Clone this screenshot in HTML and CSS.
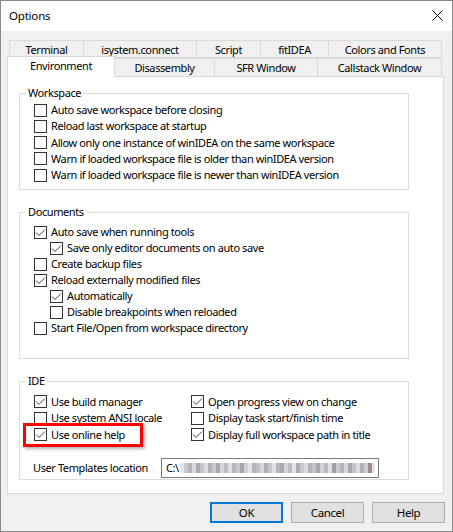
FILE: index.html
```html
<!DOCTYPE html>
<html>
<head>
<meta charset="utf-8">
<link rel="stylesheet" href="styles.css">
</head>
<body>
<div class="window">
  <div class="titlebar">
    <span class="title">Options</span>
    <svg class="close" width="11" height="11" viewBox="0 0 11 11"><path d="M0.5 0.5 L10.5 10.5 M10.5 0.5 L0.5 10.5" stroke="#000" stroke-width="1" fill="none"/></svg>
  </div>
  <div class="body">
    <div class="tabrow back">
      <div class="tab t-terminal">Terminal</div>
      <div class="tab t-isystem">isystem.connect</div>
      <div class="tab t-script">Script</div>
      <div class="tab t-fit">fitIDEA</div>
      <div class="tab t-colors">Colors and Fonts</div>
    </div>
    <div class="tabrow front">
      <div class="tab active t-env">Environment</div>
      <div class="tab t-dis">Disassembly</div>
      <div class="tab t-sfr">SFR Window</div>
      <div class="tab t-call">Callstack Window</div>
    </div>
    <div class="panel">
      <fieldset class="group ws">
        <legend>Workspace</legend>
        <div class="rows">
          <div class="cb"><span class="box"></span>Auto save workspace before closing</div>
          <div class="cb"><span class="box"></span>Reload last workspace at startup</div>
          <div class="cb"><span class="box"></span>Allow only one instance of winIDEA on the same workspace</div>
          <div class="cb"><span class="box"></span>Warn if loaded workspace file is older than winIDEA version</div>
          <div class="cb"><span class="box"></span>Warn if loaded workspace file is newer than winIDEA version</div>
        </div>
      </fieldset>
      <fieldset class="group docs">
        <legend>Documents</legend>
        <div class="rows">
          <div class="cb"><span class="box checked"></span>Auto save when running tools</div>
          <div class="cb sub"><span class="box checked"></span>Save only editor documents on auto save</div>
          <div class="cb"><span class="box"></span>Create backup files</div>
          <div class="cb"><span class="box checked"></span>Reload externally modified files</div>
          <div class="cb sub"><span class="box checked"></span>Automatically</div>
          <div class="cb sub"><span class="box"></span>Disable breakpoints when reloaded</div>
          <div class="cb"><span class="box"></span>Start File/Open from workspace directory</div>
        </div>
      </fieldset>
      <fieldset class="group ide">
        <legend>IDE</legend>
        <div class="ide-grid">
          <div class="cb"><span class="box checked"></span>Use build manager</div>
          <div class="cb"><span class="box checked"></span>Open progress view on change</div>
          <div class="cb"><span class="box"></span>Use system ANSI locale</div>
          <div class="cb"><span class="box"></span>Display task start/finish time</div>
          <div class="cb highlight-wrap"><span class="box checked"></span>Use online help<span class="highlight"></span></div>
          <div class="cb"><span class="box checked"></span>Display full workspace path in title</div>
        </div>
        <div class="templates">
          <span class="tlabel">User Templates location</span>
          <div class="input"><span class="path">C:\</span><span class="blur"></span></div>
        </div>
      </fieldset>
    </div>
    <div class="buttons">
      <div class="btn default">OK</div>
      <div class="btn">Cancel</div>
      <div class="btn">Help</div>
    </div>
  </div>
</div>
</body>
</html>
```
FILE: styles.css
```css
* { box-sizing: border-box; }
html, body { margin: 0; padding: 0; }
body {
  font-family: "Noto Sans", "Open Sans", sans-serif;
  font-size: 11px;
  letter-spacing: -0.4px;
  color: #000;
  background: #f0f0f0;
}
.window {
  width: 453px;
  height: 532px;
  border: 1px solid #8a8a8a;
  background: #f0f0f0;
  display: flex;
  flex-direction: column;
}
.titlebar {
  height: 30px;
  background: #fff;
  display: flex;
  align-items: center;
  justify-content: space-between;
  padding: 0 9px 0 8px;
}
.title { font-size: 11.5px; line-height: 16px; letter-spacing: -0.2px; }
.close { display: block; margin-top: -1px; }
.body {
  flex: 1;
  padding-top: 9px;
}
.tabrow { display: flex; }
.tabrow.back { margin-left: 8px; height: 18px; }
.tabrow.front { margin-left: 6px; margin-top: -2px; align-items: flex-start; }
.tab {
  border: 1px solid #d9d9d9;
  margin-right: -1px;
  background: #f0f0f0;
  text-align: center;
  line-height: 16px;
  white-space: nowrap;
}
.tabrow.back .tab { height: 18px; padding-top: 1px; }
.tabrow.front .tab { height: 18px; margin-top: 2px; border-bottom: 0; line-height: 17px; }
.tabrow.front .tab.active {
  height: 21px;
  margin-top: 0;
  background: #fff;
  position: relative;
  z-index: 1;
  line-height: 17px;
}
.t-terminal { width: 75px; }
.t-isystem { width: 114px; }
.t-script { width: 65px; }
.t-fit { width: 69px; }
.t-colors { width: 114px; }
.t-env { width: 108px; }
.t-dis { width: 101px; }
.t-sfr { width: 104px; }
.t-call { width: 125px; }

.panel {
  margin-left: 6px;
  margin-top: -1px;
  width: 437px;
  height: 418px;
  border: 1px solid #d9d9d9;
  background: #fff;
  padding: 9px 0 0 11px;
}
.group {
  width: 390px;
  margin: 0;
  padding: 0 0 0 14px;
  border: 1px solid #dcdcdc;
  min-width: 0;
}
.group legend {
  padding: 0 2px;
  margin-left: -8px;
  line-height: 14px;
}
.group.ws { padding-top: 2px; padding-bottom: 6px; }
.group.docs { margin-top: 15px; padding-top: 5px; padding-bottom: 22px; }
.group.ide { margin-top: 15px; padding-top: 5px; padding-bottom: 1px; padding-left: 0; }
.group.ide legend { margin-left: 6px; }
.group.ws .cb { height: 16.25px; }
.group.docs .cb { height: 16px; }
.cb {
  display: flex;
  align-items: center;
  white-space: nowrap;
  line-height: 16px;
}
.cb.sub { padding-left: 16px; }
.box {
  width: 13px;
  height: 13px;
  border: 1px solid #333;
  background: #fff;
  margin-right: 4px;
  flex: none;
}
.box.checked {
  background: #fff url("data:image/svg+xml;utf8,<svg xmlns='http://www.w3.org/2000/svg' width='11' height='11' viewBox='0 0 11 11'><path d='M1 5.5 L4 8.5 L10 2.5' stroke='%23444' stroke-width='1' fill='none'/></svg>") no-repeat center;
}
.ide-grid {
  display: grid;
  grid-template-columns: 157px 1fr;
  padding-left: 14px;
}
.ide-grid .cb { height: 16.5px; }
.highlight-wrap { position: relative; }
.highlight {
  position: absolute;
  left: -11px;
  top: -3px;
  width: 120px;
  height: 24px;
  border: 3px solid #f00;
  box-shadow: 2px 2px 3px rgba(0,0,0,0.3);
}
.templates {
  display: flex;
  align-items: center;
  margin-top: 15px;
  padding-left: 13px;
}
.tlabel { width: 128px; white-space: nowrap; }
.input {
  width: 218px;
  height: 20px;
  border: 1px solid #7a7a7a;
  display: flex;
  align-items: center;
  padding-left: 4px;
  overflow: hidden;
}
.path { margin-right: 1px; }
.blur {
  width: 195px;
  height: 10px;
  background: linear-gradient(90deg,
    #e6e6ea 0 4px, #c9c9ce 4px 8px, #b4b4bb 8px 12px, #d8d8dc 12px 16px, #a9a9b1 16px 20px,
    #c3c3c8 20px 24px, #dcdce0 24px 28px, #b0b0b6 28px 32px, #c7c7cc 32px 36px, #a7a7ad 36px 40px,
    #d6d6da 40px 44px, #bcbcc2 44px 48px, #e0e0e4 48px 52px, #b7b7bd 52px 56px, #c9c9cf 56px 60px,
    #a5a5ad 60px 64px, #cfcfd4 64px 68px, #e4e4e7 68px 72px, #b3b3ba 72px 76px, #c0c0c6 76px 80px,
    #d9d9dd 80px 84px, #aeaeb4 84px 88px, #c6c6cb 88px 92px, #e2e2e5 92px 96px, #b6b6bc 96px 100px,
    #a9a9b0 100px 104px, #d3d3d7 104px 108px, #bdbdc3 108px 112px, #e5e5e8 112px 116px, #acacb3 116px 120px,
    #c8c8cd 120px 124px, #dadade 124px 128px, #b2b2b9 128px 132px, #c4c4c9 132px 136px, #a8a8af 136px 140px,
    #d5d5d9 140px 144px, #bbbbc1 144px 148px, #e1e1e4 148px 152px, #9f9fa7 152px 156px, #cacacf 156px 160px,
    #b5b5bb 160px 164px, #d7d7db 164px 168px, #a6a6ad 168px 172px, #c2c2c8 172px 176px, #dedee2 176px 180px,
    #b1b1b8 180px 184px, #cdcdd2 184px 188px, #9c8a90 188px 192px, #e5e5e5 192px 195px);
}
.buttons {
  display: flex;
  justify-content: flex-end;
  gap: 8px;
  padding-right: 7px;
  margin-top: 8px;
}
.btn {
  width: 73px;
  height: 21px;
  background: #e1e1e1;
  border: 1px solid #adadad;
  display: flex;
  align-items: center;
  justify-content: center;
  line-height: 16px;
  font-size: 11.5px;
}
.btn.default { border: 2px solid #0078d7; }
```
